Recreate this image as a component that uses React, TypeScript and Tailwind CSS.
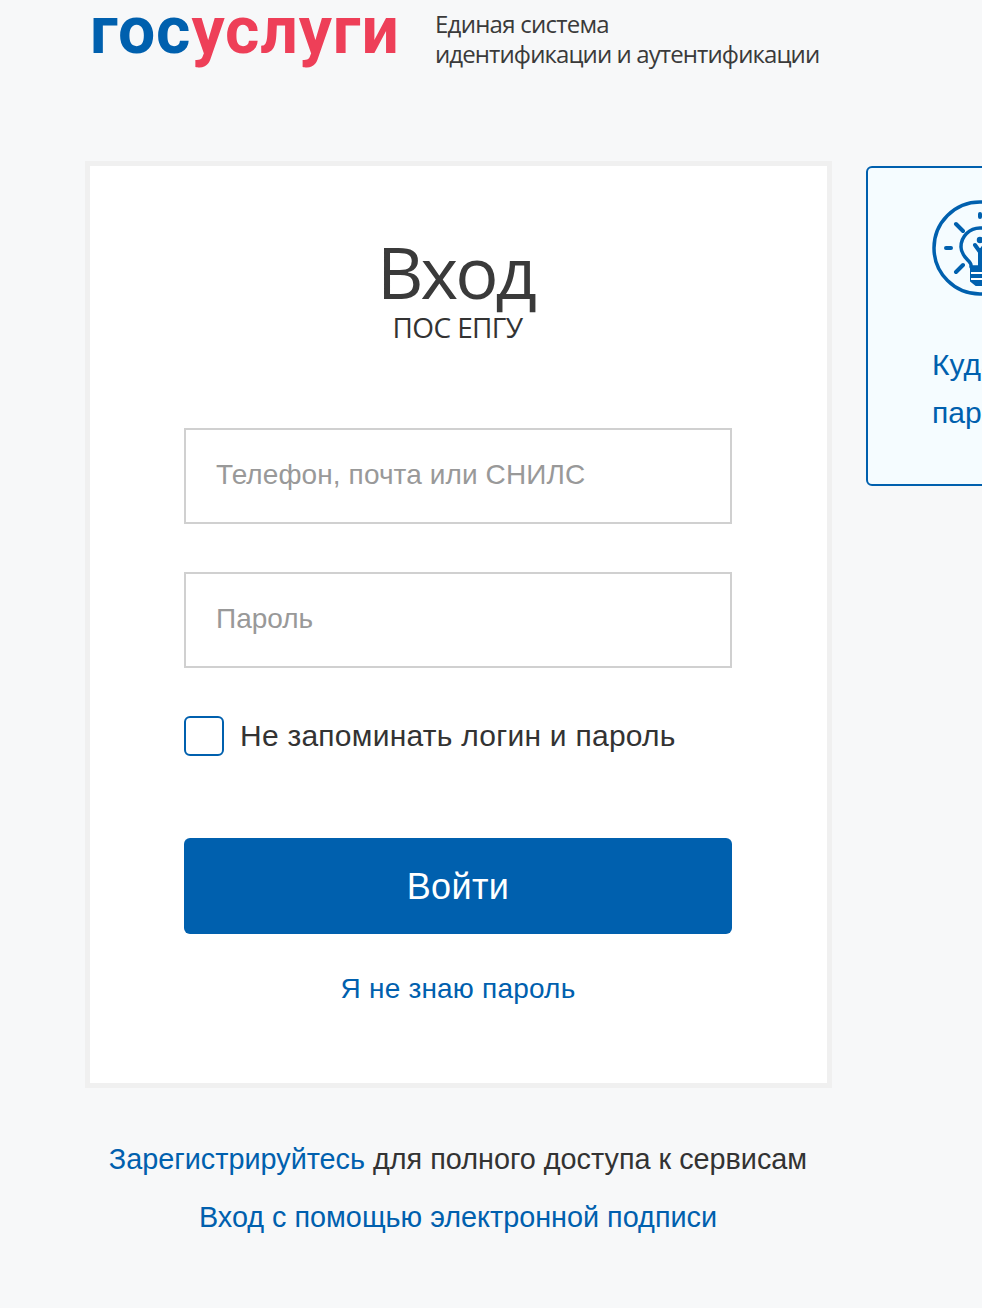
const font = "font-['Liberation_Sans',Arial,sans-serif]";

function Bulb() {
  return (
    <svg width="96" height="96" viewBox="0 0 96 96" fill="none" stroke="#0060ae" strokeWidth="3.5" strokeLinecap="round" strokeLinejoin="round">
      <circle cx="48" cy="48" r="46" />
      <path d="M48 14v3M24 24l7 7M14 48h5M24 72l7-7" strokeWidth="4" />
      <path d="M39 67v-2c0-4-10-8-10-18a19 19 0 0 1 38 0c0 10-10 14-10 18v2z" />
      <path d="M43 45l5 7 5-7M48 52v14" strokeWidth="4" />
      <circle cx="48" cy="40" r="1.5" fill="#0060ae" />
      <path d="M39 67h18v14l-5 4h-8l-5-4z" fill="#0060ae" strokeWidth="2" />
      <path d="M39 73h18M39 79h18" stroke="#ffffff" strokeWidth="2" strokeLinecap="butt" />
    </svg>
  );
}

export default function App() {
  return (
    <div className={`${font} w-[982px] h-[1308px] overflow-hidden bg-[#f7f8f9] text-[#333]`}>
      <header className="h-[161px] pl-[90px] flex items-start">
        <div className="w-[345px] h-[80px] font-['Roboto',sans-serif] font-bold text-[66px] leading-[61px] tracking-[0.9px] whitespace-nowrap">
          <span className="text-[#0060ae]">гос</span>
          <span className="text-[#ee3f58]">услуги</span>
        </div>
        <div className="pt-[9px] font-['Open_Sans',sans-serif] text-[24px] leading-[30px] text-[#3a3a3a] whitespace-nowrap">
          <div className="tracking-[-0.75px]">Единая система</div>
          <div className="tracking-[-0.9px]">идентификации и аутентификации</div>
        </div>
      </header>
      <main className="flex items-start pl-[85px] gap-[34px]">
        <section className="w-[747px] h-[927px] shrink-0 border-[5px] border-[#f0f0f0] bg-white flex flex-col items-center pr-[1px]">
          <h1 className="mt-[69px] pr-[5px] font-['Open_Sans',sans-serif] font-medium text-[72px] leading-[72px] tracking-[-3px] text-[#3a3a3a]">Вход</h1>
          <div className="pr-[1px] font-['Open_Sans',sans-serif] text-[28px] leading-[36px] mt-[2px] tracking-[-0.6px] text-[#333]">ПОС ЕПГУ</div>
          <div className="mt-[83px] w-[548px] flex flex-col gap-[48px]">
            <div className="h-[96px] border-2 border-[#d0d0d0] pl-[30px] flex items-center text-[28px] tracking-[0.1px] text-[#999] pb-[2px]">Телефон, почта или СНИЛС</div>
            <div className="h-[96px] border-2 border-[#d0d0d0] pl-[30px] flex items-center text-[28px] text-[#999] pb-[2px]">Пароль</div>
          </div>
          <div className="mt-[48px] w-[548px] flex items-center gap-[16px]">
            <div className="w-[40px] h-[40px] border-2 border-[#0060ae] rounded-[6px] bg-white" />
            <span className="text-[30px] leading-[40px] tracking-[0.25px] text-[#333]">Не запоминать логин и пароль</span>
          </div>
          <button className="mt-[82px] w-[548px] h-[96px] pt-[2px] bg-[#0060ae] rounded-[6px] text-white text-[36px] tracking-[0.4px]">Войти</button>
          <a className="mt-[37px] text-[28px] leading-[36px] tracking-[0.2px] text-[#0060ae]">Я не знаю пароль</a>
        </section>
        <aside className="w-[400px] h-[320px] mt-[5px] shrink-0 border-2 border-[#0060ae] rounded-[6px] bg-[#f5fcff] pl-[64px] pt-[32px]">
          <Bulb />
          <div className="mt-[45px] text-[30px] leading-[48px] text-[#0060ae] whitespace-nowrap">
            <div>Куда ввести</div>
            <div>пароль</div>
          </div>
        </aside>
      </main>
      <div className="w-[746px] ml-[85px] mt-[53px] text-center text-[28.8px] leading-[36px]">
        <div><a className="text-[#0060ae]">Зарегистрируйтесь</a> для полного доступа к сервисам</div>
        <div className="mt-[22px] text-[#0060ae]">Вход с помощью электронной подписи</div>
      </div>
    </div>
  );
}
